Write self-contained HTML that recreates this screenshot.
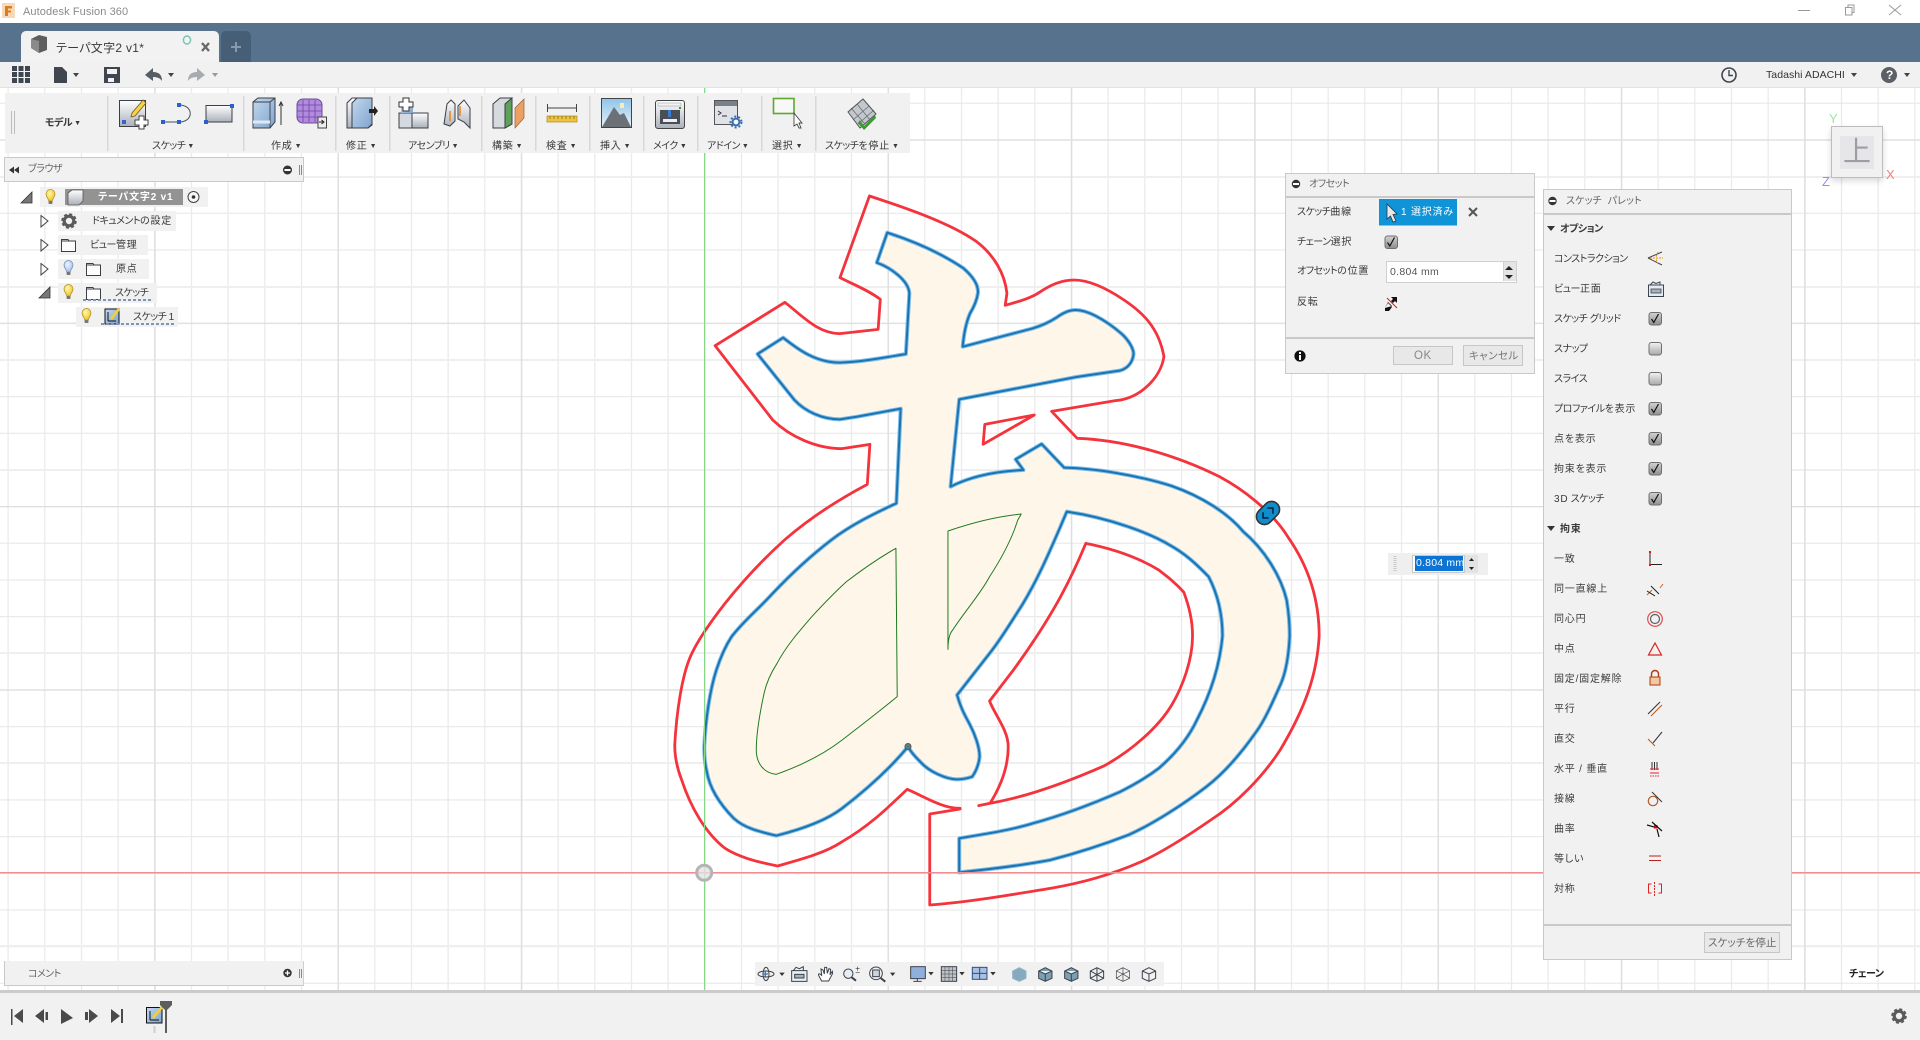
<!DOCTYPE html>
<html lang="ja"><head><meta charset="utf-8"><title>Autodesk Fusion 360</title>
<style>
html,body{margin:0;padding:0;background:#fff;width:1920px;height:1040px;overflow:hidden}
body{position:relative;font-family:"Liberation Sans","Noto Sans CJK JP",sans-serif;font-size:10px;color:#333}
.b{position:absolute;box-sizing:border-box}
.t{position:absolute;white-space:nowrap;line-height:12px;font-size:10px;letter-spacing:-.5px;font-feature-settings:"palt";color:#3a3a3a}
.p{background:#f1f1f1;border:1.5px solid #c9c9c9}
svg{position:absolute;left:0;top:0}
.ar{font-size:7px;vertical-align:1px;margin-left:2px;letter-spacing:0}
.bd{font-weight:bold}
em{font-style:normal;letter-spacing:.8px}
</style></head><body>

<!-- canvas grid -->
<svg width="1920" height="1040" viewBox="0 0 1920 1040" style="z-index:0">
<defs>
<pattern id="gx" patternUnits="userSpaceOnUse" x="704.2" y="0" width="36.667" height="10"><rect width="1.2" height="10" fill="#e9e9e9"/></pattern>
<pattern id="gy" patternUnits="userSpaceOnUse" x="0" y="872.7" width="10" height="36.667"><rect width="10" height="1.2" fill="#e9e9e9"/></pattern>
<pattern id="mx" patternUnits="userSpaceOnUse" x="704.2" y="0" width="183.333" height="10"><rect width="1.4" height="10" fill="#dedede"/></pattern>
<pattern id="my" patternUnits="userSpaceOnUse" x="0" y="872.7" width="10" height="183.333"><rect width="10" height="1.2" fill="#dedede"/></pattern>
<linearGradient id="box" x1="0" y1="0" x2="0" y2="1"><stop offset="0" stop-color="#fff"/><stop offset="1" stop-color="#aab0ba"/></linearGradient>
<linearGradient id="blu" x1="0" y1="0" x2="1" y2="1"><stop offset="0" stop-color="#c3d8ee"/><stop offset="1" stop-color="#7fa3cf"/></linearGradient>
<linearGradient id="cbg" x1="0" y1="0" x2="0" y2="1"><stop offset="0" stop-color="#f2f2f2"/><stop offset="1" stop-color="#a8a8a8"/></linearGradient>
<linearGradient id="cbc" x1="0" y1="0" x2="0" y2="1"><stop offset="0" stop-color="#d2d2d2"/><stop offset="1" stop-color="#8e8e8e"/></linearGradient>
<linearGradient id="sky" x1="0" y1="0" x2="0" y2="1"><stop offset="0" stop-color="#8fc4ea"/><stop offset="1" stop-color="#e8f2f6"/></linearGradient>
<radialGradient id="yb" cx=".4" cy=".35" r=".7"><stop offset="0" stop-color="#fff7a8"/><stop offset="1" stop-color="#eec21e"/></radialGradient>
<radialGradient id="bb" cx=".4" cy=".35" r=".7"><stop offset="0" stop-color="#eef4ff"/><stop offset="1" stop-color="#9fbbe8"/></radialGradient>
<symbol id="cb0" overflow="visible"><rect x="-6" y="-6" width="12.5" height="12.5" rx="2.5" fill="url(#cbg)" stroke="#6e6e6e" stroke-width="1"/></symbol>
<symbol id="cb1" overflow="visible"><rect x="-6" y="-6" width="12.5" height="12.5" rx="2.5" fill="url(#cbc)" stroke="#6e6e6e" stroke-width="1"/><path d="M-3.5,.5 L-1.2,4 L3.5,-4.5" fill="none" stroke="#111" stroke-width="1.2"/></symbol>
<symbol id="by" overflow="visible"><path d="M-1.8,4 C-2,1.5 -4.5,0 -4.5,-3 A4.5,4.5 0 0 1 4.5,-3 C4.5,0 2,1.5 1.8,4 Z" fill="url(#yb)" stroke="#a88a28" stroke-width=".7"/><rect x="-2" y="4" width="4" height="3" rx="1" fill="#777"/></symbol>
<symbol id="bl" overflow="visible"><path d="M-1.8,4 C-2,1.5 -4.5,0 -4.5,-3 A4.5,4.5 0 0 1 4.5,-3 C4.5,0 2,1.5 1.8,4 Z" fill="url(#bb)" stroke="#7188ad" stroke-width=".7"/><rect x="-2" y="4" width="4" height="3" rx="1" fill="#777"/></symbol>
<symbol id="fd" overflow="visible"><path d="M.5,1.5 H7 L8,3 H14.5 V13.5 H.5 Z M.5,3 H8" fill="#fdfdfd" stroke="#3b3f46" stroke-width="1"/></symbol>
<symbol id="gear" overflow="visible"><circle r="4.8" fill="none" stroke="#5a5a5a" stroke-width="3.2"/><circle r="6.8" fill="none" stroke="#5a5a5a" stroke-width="2" stroke-dasharray="3 2.34"/></symbol>
<path id="bp" vector-effect="non-scaling-stroke" d="M524,158 C600,190 660,230 700,265 C722,290 735,315 733,340 C730,365 722,385 715,400 C705,430 700,470 698,500 L860,445 C885,435 900,425 915,412 C930,398 945,390 958,390 C975,390 990,398 1005,408 C1030,425 1050,445 1065,462 C1080,480 1092,505 1092,522 C1090,545 1080,565 1060,572 L960,591 L690,658 L670,920 C700,900 750,875 838,870 L820,838 L880,792 L932,863 C1000,865 1100,885 1180,918 C1250,950 1310,1000 1345,1055 C1395,1110 1432,1190 1445,1260 C1450,1300 1452,1340 1452,1368 C1450,1420 1445,1470 1432,1510 C1415,1560 1395,1620 1375,1655 C1340,1720 1300,1780 1260,1820 C1210,1870 1140,1930 1080,1965 C1020,1995 960,2020 900,2040 C830,2057 760,2068 690,2077 L690,1975 C750,1962 810,1950 860,1930 C930,1905 1000,1870 1060,1836 C1100,1810 1125,1790 1150,1765 C1190,1720 1220,1670 1238,1620 C1262,1560 1290,1470 1297,1368 C1297,1300 1285,1240 1265,1190 C1235,1150 1210,1120 1175,1095 C1130,1060 1040,1015 938,995 L920,1050 C895,1125 870,1200 835,1275 C810,1325 785,1380 760,1420 L685,1545 C695,1590 705,1610 715,1635 C725,1660 737,1700 737,1730 C735,1755 728,1775 720,1790 C705,1797 695,1798 685,1798 C660,1798 620,1775 600,1745 C590,1732 580,1720 572,1700 C540,1750 490,1815 420,1885 C380,1925 320,1950 268,1967 C230,1955 195,1945 170,1915 C140,1875 115,1830 108,1775 C102,1745 102,1720 102,1700 C105,1620 115,1530 130,1470 C140,1430 150,1400 165,1370 C195,1320 225,1290 260,1240 C300,1185 350,1125 395,1080 C440,1035 495,1000 545,970 L555,686 L455,710 L415,718 C375,718 335,695 310,660 L225,522 L284,473 C320,510 360,548 415,548 C470,545 520,532 567,522 L575,340 C573,300 530,262 500,248 Z"/>
</defs>
<g>
<rect x="0" y="88" width="1920" height="902" fill="url(#gx)"/>
<rect x="0" y="88" width="1920" height="902" fill="url(#gy)"/>
<g fill="#efefef">
<rect y="176" width="1920" height="2"/><rect y="286" width="1920" height="2"/><rect y="359" width="1920" height="2"/><rect y="469" width="1920" height="2"/><rect y="652" width="1920" height="2"/><rect y="762" width="1920" height="2"/><rect y="945" width="1920" height="2"/>
</g>
<rect x="0" y="88" width="1920" height="902" fill="url(#mx)"/>
<rect x="0" y="88" width="1920" height="902" fill="url(#my)"/>
</g>

<!-- sketch -->
<g transform="translate(660,180) scale(.43367,.33333)" fill="none" stroke-linejoin="round" stroke-linecap="round">
<use href="#bp" style="fill:#fff6ea;stroke:#7cbcea;stroke-width:4px"/>
<use href="#bp" style="fill:none;stroke:#1b74b0;stroke-width:2px"/>
<path stroke="#f5333c" stroke-width="2.8" vector-effect="non-scaling-stroke" d="M483,48 C570,85 670,130 730,185 C770,225 795,280 800,340 L796,376 C825,365 855,355 875,337 C900,315 925,300 955,300 C990,300 1030,325 1070,360 C1110,395 1150,440 1162,530 C1155,590 1110,655 1050,662 L903,694 L962,775 C1070,780 1190,825 1290,890 C1340,925 1410,990 1450,1075 C1495,1160 1520,1260 1520,1368 C1515,1480 1490,1580 1430,1710 C1390,1790 1330,1870 1270,1920 C1220,1965 1160,2015 1110,2045 C1040,2085 970,2110 900,2125 C830,2140 720,2165 622,2175 L622,1902 L692,1887 M692,1885 C650,1885 610,1850 570,1828 C520,1890 480,1940 420,1985 C380,2020 320,2040 271,2058 C220,2045 180,2030 150,2005 C105,1960 70,1880 50,1800 C38,1760 34,1730 34,1695 C38,1600 50,1490 70,1430 C85,1385 120,1320 150,1270 C190,1205 240,1135 287,1080 C340,1020 410,960 478,913 L484,793 L420,806 C360,806 300,770 260,720 L127,497 L288,367 C330,410 365,461 415,461 L503,448 L508,358 C480,330 440,310 415,293 L483,48 M735,1877 L760,1870 C850,1850 950,1800 1025,1757 C1090,1710 1150,1640 1180,1575 C1205,1520 1228,1440 1228,1368 C1228,1320 1220,1280 1208,1237 C1190,1210 1170,1190 1150,1170 C1100,1130 1040,1105 982,1090 C950,1190 910,1300 815,1470 L760,1563 C770,1600 803,1650 803,1700 C803,1770 780,1830 762,1868 M863,705 L749,733 L745,793 Z"/>
<path stroke="#1f7a1f" stroke-width="1" vector-effect="non-scaling-stroke" d="M544,1105 L547,1550 C500,1600 460,1640 420,1680 C390,1710 340,1750 268,1783 C240,1780 222,1750 222,1710 C222,1660 230,1600 240,1540 C245,1510 255,1480 270,1450 C290,1400 320,1355 350,1310 C375,1275 400,1240 430,1205 C470,1165 510,1130 544,1105 Z M833,1002 C770,1010 715,1030 664,1053 L664,1408 C664,1380 668,1360 675,1350 C705,1290 740,1240 760,1190 C785,1140 805,1090 817,1050 L825,1020 Z"/>
</g>
<!-- axes -->
<rect x="704" y="88" width="1" height="902" fill="#86d886"/>
<rect x="0" y="872" width="1920" height="1.4" fill="#ee8e8e"/>
<circle cx="704.2" cy="872.7" r="7.5" fill="#e2e2e2" fill-opacity=".8" stroke="#b4b4b4" stroke-width="3"/>
<circle cx="908" cy="746.5" r="3" fill="#6a8a6a" stroke="#555" stroke-width="1"/><circle cx="908" cy="746.5" r="1.5" fill="#2a7fc0"/>
<g transform="translate(1268,513) rotate(-45)"><rect x="-13" y="-8" width="26" height="16" rx="8" fill="#0e8fcc" stroke="#333" stroke-width="1.6"/><path d="M-3,-4 L-7,0 L-3,4 M3,-4 L7,0 L3,4" fill="none" stroke="#124" stroke-width="1.6"/></g>
</svg>

<!-- top chrome -->
<div class="b" style="left:0;top:0;width:1920px;height:23px;background:#fff"></div>
<div class="b" style="left:0;top:23px;width:1920px;height:39px;background:#56728c"></div>
<div class="b" style="left:21px;top:31px;width:198px;height:31px;background:#f2f2f2;border-radius:5px 5px 0 0"></div>
<div class="b" style="left:221px;top:31px;width:30px;height:31px;background:#465f76;border-radius:5px 5px 0 0"></div>
<div class="b" style="left:0;top:62px;width:1920px;height:26px;background:#f1f1f1;border-bottom:1px solid #e2e2e2"></div>
<!-- toolbar -->
<div class="b" style="left:5px;top:93px;width:905px;height:60px;background:#f1f1f1"></div>
<!-- panels -->
<div class="b p" style="left:4px;top:157px;width:300px;height:25px"></div>
<div class="b p" style="left:4px;top:961px;width:300px;height:25px;border-top:0;border-right:1.5px solid #d0d0d0"></div>
<div class="b" style="left:755px;top:962px;width:409px;height:24px;background:#f1f1f1"></div>
<!-- tree row bg -->
<div class="b" style="left:40px;top:187px;width:168px;height:20px;background:#f1f1f1"></div>
<div class="b" style="left:65px;top:189px;width:118px;height:16px;background:#939393"></div>
<div class="b" style="left:58px;top:211px;width:118px;height:20px;background:#f1f1f1"></div>
<div class="b" style="left:58px;top:235px;width:90px;height:20px;background:#f1f1f1"></div>
<div class="b" style="left:58px;top:259px;width:91px;height:20px;background:#f1f1f1"></div>
<div class="b" style="left:58px;top:283px;width:99px;height:20px;background:#f1f1f1"></div>
<div class="b" style="left:76px;top:307px;width:102px;height:20px;background:#f1f1f1"></div>
<!-- offset dialog -->
<div class="b p" style="left:1285px;top:172.5px;width:250px;height:201px"></div>
<div class="b" style="left:1286px;top:196px;width:248px;height:1.5px;background:#c9c9c9"></div>
<div class="b" style="left:1286px;top:337px;width:248px;height:1.5px;background:#c9c9c9"></div>
<div class="b" style="left:1379px;top:198.5px;width:78px;height:27px;background:#0f94d8;border-bottom:1px solid #7cc4ea"></div>
<div class="b" style="left:1386px;top:261px;width:131px;height:21.5px;background:#fff;border:1.5px solid #d0d0d0"></div>
<div class="b" style="left:1503px;top:262px;width:13px;height:19px;background:#e4e4e4;border-left:1px solid #d0d0d0"></div>
<div class="b" style="left:1393px;top:346px;width:60px;height:19px;background:#e8e8e8;border:1.5px solid #c6c6c6"></div>
<div class="b" style="left:1463px;top:345px;width:60px;height:21px;background:#e8e8e8;border:1.5px solid #c6c6c6"></div>
<!-- palette -->
<div class="b p" style="left:1542.5px;top:189px;width:249.5px;height:771px"></div>
<div class="b" style="left:1543px;top:213px;width:248px;height:1.5px;background:#c9c9c9"></div>
<div class="b" style="left:1543px;top:924px;width:248px;height:1.5px;background:#c9c9c9"></div>
<div class="b" style="left:1704px;top:932px;width:76px;height:21px;background:#e8e8e8;border:1.5px solid #c6c6c6"></div>
<!-- float input -->
<div class="b" style="left:1388px;top:553px;width:100px;height:22px;background:#efefef"></div>
<div class="b" style="left:1412px;top:555px;width:53px;height:18px;background:#fff;border:1px solid #c9c9c9"></div>
<div class="b" style="left:1415px;top:556px;width:48px;height:15px;background:#0b74d4"></div>
<div class="b" style="left:1465px;top:555px;width:13px;height:18px;background:#e3e3e3"></div>
<!-- view cube -->
<div class="b" style="left:1831px;top:126px;width:52px;height:52px;background:#f1f1f1;border:1px solid #bdbdbd;box-shadow:0 3px 6px rgba(0,0,0,.15)"></div>
<div class="b" style="left:1840px;top:136px;width:34px;height:33px;background:#e6e6e8"></div>
<!-- bottom -->
<div class="b" style="left:0;top:990px;width:1920px;height:50px;background:#f1f1f1;border-top:3px solid #cbcbcb"></div>

<!-- icons overlay -->
<svg width="1920" height="1040" viewBox="0 0 1920 1040" style="z-index:2">
<!-- title -->
<rect x="2" y="3" width="13" height="15" fill="#f6d9b8"/><path d="M5,6 H12 V8.5 H8 V10.5 H11 V12.5 H8 V16 H5 Z" fill="#e07a1f"/>
<path d="M1798,10.5 H1810" stroke="#999" stroke-width="1"/>
<path d="M1845.5,7.5 H1852 V15 H1845.5 Z M1848,7.5 V5 H1854 V12.5 H1852" fill="none" stroke="#999" stroke-width="1"/>
<path d="M1889,5 L1901,15 M1901,5 L1889,15" stroke="#999" stroke-width="1"/>
<!-- tab -->
<path d="M31,39 L39,35 L47,37 V50 L39,53 L31,48 Z" fill="#5e5e5e"/><path d="M31,39 L39,41 L39,53 L31,48 Z" fill="#8a8a8a"/>
<ellipse cx="187" cy="40" rx="3.6" ry="4" fill="none" stroke="#74c4b0" stroke-width="1.4"/>
<path d="M202,43 L209,51 M209,43 L202,51" stroke="#6a6a6a" stroke-width="2.4"/>
<path d="M236,42 V52 M231,47 H241" stroke="#8799aa" stroke-width="2"/>
<!-- quick bar -->
<g fill="#3f4650"><rect x="12" y="66" width="5" height="5"/><rect x="18.5" y="66" width="5" height="5"/><rect x="25" y="66" width="5" height="5"/><rect x="12" y="72" width="5" height="5"/><rect x="18.5" y="72" width="5" height="5"/><rect x="25" y="72" width="5" height="5"/><rect x="12" y="78" width="5" height="5"/><rect x="18.5" y="78" width="5" height="5"/><rect x="25" y="78" width="5" height="5"/></g>
<path d="M54,67 H62 L67,72 V83 H54 Z" fill="#3f4650"/><path d="M73,73 H79 L76,77 Z" fill="#444"/>
<path d="M104,67 H120 V83 H104 Z" fill="#3f4650"/><rect x="107" y="69" width="10" height="5" fill="#f1f1f1"/><rect x="108" y="78" width="6" height="4" fill="#f1f1f1"/>
<path d="M145,75 L153,68 V72 C159,72 162,75 162,81 C160,78 157,77 153,77 V81 Z" fill="#555d66"/><path d="M168,73 H174 L171,77 Z" fill="#444"/>
<path d="M205,75 L197,68 V72 C191,72 188,75 188,81 C190,78 193,77 197,77 V81 Z" fill="#a7acb2"/><path d="M212,73 H218 L215,77 Z" fill="#999"/>
<circle cx="1729" cy="75" r="7" fill="none" stroke="#3f4650" stroke-width="1.6"/><path d="M1729,70 V75.5 H1733" fill="none" stroke="#3f4650" stroke-width="1.4"/>
<path d="M1851,73 H1857 L1854,77 Z" fill="#444"/>
<circle cx="1889" cy="75" r="8" fill="#5b5f66"/><path d="M1904,73 H1910 L1907,77 Z" fill="#444"/>
<!-- toolbar seps -->
<g fill="#d8d8d8"><rect x="11" y="111" width="1" height="23" fill="#bcbcbc"/><rect x="14" y="111" width="1" height="23" fill="#bcbcbc"/>
<rect x="107" y="96" width="1.5" height="55"/><rect x="243" y="96" width="1.5" height="55"/><rect x="335" y="96" width="1.5" height="55"/><rect x="389" y="96" width="1.5" height="55"/><rect x="481" y="96" width="1.5" height="55"/><rect x="535" y="96" width="1.5" height="55"/><rect x="589" y="96" width="1.5" height="55"/><rect x="643" y="96" width="1.5" height="55"/><rect x="697" y="96" width="1.5" height="55"/><rect x="761" y="96" width="1.5" height="55"/><rect x="815" y="96" width="1.5" height="55"/></g>
<!-- sketch -->
<rect x="119.5" y="100.5" width="26" height="26" fill="url(#box)" stroke="#3b3f46"/><path d="M132,113 L143,100 L146,103 L135,116 L131,117 Z" fill="#f6d24a" stroke="#6b5a20" stroke-width=".8"/>
<rect x="122" y="120" width="4" height="4" fill="#3366c8"/><path d="M139,116 H144 V120 H148 V125 H144 V129 H139 V125 H135 V120 H139 Z" fill="#fff" stroke="#444"/>
<path d="M163,122 H179 M179,105 C194,105 194,122 179,122" fill="none" stroke="#4a4f58" stroke-width="1"/>
<rect x="161" y="120" width="4" height="4" fill="#2d5fd0"/><rect x="177" y="120" width="4" height="4" fill="#2d5fd0"/><rect x="177" y="103" width="4" height="4" fill="#2d5fd0"/>
<rect x="206" y="105.5" width="26" height="16.5" fill="url(#box)" stroke="#3b3f46"/><rect x="204" y="120" width="4" height="4" fill="#2d5fd0"/><rect x="230" y="104" width="4" height="4" fill="#2d5fd0"/>
<!-- extrude -->
<path d="M253,102 L258,98 H275 V122 L270,128 H253 Z" fill="url(#blu)" stroke="#3b3f46"/><path d="M270,102 V128 M253,102 H270 L275,98" fill="none" stroke="#3b3f46" stroke-width=".9"/><path d="M253,122 H270" stroke="#dfe8f3" stroke-width="3"/>
<path d="M281,125 V103 M279,106 L281,102 L283,106" fill="none" stroke="#333" stroke-width="1"/>
<rect x="297" y="99" width="25" height="24" rx="6" fill="#b28be0" stroke="#6a4a9a"/><path d="M303,100 V122 M309,100 V122 M315,100 V122 M297,105 H322 M297,111 H322 M297,117 H322" stroke="#6a4a9a" stroke-width=".8"/>
<rect x="318" y="117" width="8.5" height="11" fill="#eee" stroke="#444"/><path d="M319,122 H323 M321.5,120 L324,122 L321.5,124" fill="none" stroke="#222"/>
<!-- modify -->
<path d="M347,103 L352,98 H372 V125 L368,128 H347 Z" fill="url(#box)" stroke="#3b3f46"/><path d="M352,103 L357,98 H372 V124 L368,128 H352 Z" fill="url(#blu)" stroke="#3b3f46"/><path d="M369,109 H374 V106 L378,111 L374,116 V113 H369 Z" fill="#222"/>
<!-- assemble -->
<path d="M399,113 H417 V128 H399 Z" fill="#d4d9df" stroke="#3b3f46"/><path d="M412,113 H428 V128 H412 Z" fill="url(#box)" stroke="#3b3f46"/><path d="M401,104 H413 V113 H401 Z" fill="url(#blu)"/>
<path d="M403,98 H409 V102 H413 V107 H409 V111 H403 V107 H399 V102 H403 Z" fill="#fff" stroke="#333"/>
<path d="M444,124 L447,104 L451,100 L455,104 V121 L450,126 Z M458,119 V106 L464,100 L470,108 V128 L464,122 Z" fill="url(#box)" stroke="#3b3f46"/><path d="M460,106 V116 M450,111 V121" stroke="#e9831c" stroke-width="1.5"/>
<!-- construct -->
<path d="M493,104 L500,98 H512 V124 L505,128 H493 Z" fill="#d6dade" stroke="#3b3f46"/><path d="M505,104 L512,98 V124 L505,128 Z" fill="#5fa05a" stroke="#3b3f46"/><path d="M515,128 V108 L524,99 V118 Z" fill="#eba066" stroke="#9a6030" stroke-width=".7"/>
<!-- inspect -->
<path d="M547.5,104 V112 M576.5,104 V112 M547.5,108 H576.5" stroke="#444" fill="none"/><rect x="547" y="116" width="30" height="6" fill="#edc43a" stroke="#a9862a" stroke-width=".7"/><path d="M550,116 v3 M554,116 v3 M558,116 v3 M562,116 v3 M566,116 v3 M570,116 v3 M574,116 v3" stroke="#7a6320" stroke-width=".7"/>
<!-- insert -->
<rect x="601.5" y="98.5" width="30" height="29" fill="url(#sky)" stroke="#444"/><path d="M602,127 L614,107 L620,115 L624,113 L631,127 Z" fill="#6c7178"/><rect x="620" y="103" width="4" height="5" fill="#f6efb4"/>
<!-- make -->
<rect x="655.5" y="100.5" width="29" height="28" rx="2.5" fill="url(#box)" stroke="#444"/><rect x="660" y="110" width="20" height="14" fill="#4a4e55"/><rect x="663" y="119" width="14" height="3" fill="#eee"/><rect x="668" y="110" width="3" height="7" fill="#3b7bd0"/><rect x="658" y="103" width="23" height="3" fill="#f3f3f3" stroke="#999" stroke-width=".5"/><rect x="679" y="107" width="2" height="2" fill="#3b9a3b"/>
<!-- addin -->
<rect x="714.5" y="100.5" width="23" height="24" fill="#dfe2e7" stroke="#555"/><rect x="715" y="101" width="22" height="5" fill="#7b8088"/><path d="M718,111 L721,113 L718,115 M722,116 H727" fill="none" stroke="#333"/><circle cx="736" cy="122" r="3.4" fill="#fff" stroke="#3a6fb0" stroke-width="2"/><circle cx="736" cy="122" r="5.5" fill="none" stroke="#3a6fb0" stroke-width="2" stroke-dasharray="2 2"/>
<!-- select -->
<rect x="773.5" y="98.5" width="20.5" height="15" fill="#f8f8f8" stroke="#5ca82e" stroke-width="1.6"/><path d="M794,113 L802,123 L799,123 L801,128 L799,128 L797,124 L794,126 Z" fill="#fff" stroke="#444" stroke-width=".9"/>
<!-- finish -->
<path d="M863,99 L876,114 L860,128 L848,112 Z" fill="#c3c8cf" stroke="#555"/><path d="M857,104 L870,120 M851,108 L865,124 M869,106 L853,120 M874,110 L857,125" stroke="#666" stroke-width=".7"/><path d="M860,120 L864,126 L875,115 L876,118 L864,130 L858,123 Z" fill="#3c9a32"/>
<!-- browser head -->
<path d="M9,170 L14,166.5 V173.5 Z M14,170 L19,166.5 V173.5 Z" fill="#333"/>
<circle cx="287.5" cy="170" r="4.5" fill="#333"/><rect x="284.5" y="169" width="6" height="2" fill="#fff"/>
<rect x="299" y="165" width="1" height="10" fill="#8a8a8a"/><rect x="301" y="165" width="1" height="10" fill="#8a8a8a"/>
<!-- tree -->
<path d="M21,203 L32,192 V203 Z" fill="#777" stroke="#333" stroke-width=".8"/>
<use href="#by" x="50.5" y="197"/>
<path d="M68,193 L72,190 H83 V201 L79,205 H68 Z" fill="url(#box)" stroke="#555" stroke-width=".8"/>
<circle cx="193.5" cy="197" r="5.5" fill="#f6f6f6" stroke="#444"/><circle cx="193.5" cy="197" r="1.8" fill="#333"/>
<path d="M41,215.5 L48,221 L41,227 Z M41,239.5 L48,245 L41,251 Z M41,263.5 L48,269 L41,275 Z" fill="#fbfbfb" stroke="#444"/>
<use href="#gear" x="69" y="221"/>
<use href="#fd" x="61" y="238"/>
<use href="#bl" x="68.5" y="268"/><use href="#fd" x="86" y="262"/>
<path d="M39,298 L50,287 V298 Z" fill="#777" stroke="#333" stroke-width=".8"/>
<use href="#by" x="68.5" y="292"/><use href="#fd" x="86" y="286"/>
<use href="#by" x="86.5" y="316"/>
<rect x="105" y="309" width="14" height="15" fill="url(#blu)" stroke="#111" stroke-width="1"/><path d="M108,321 V312 M108,321 H116" stroke="#111"/><path d="M110,318 L118,308 L120,310 L112,320 Z" fill="#f2cf3a"/>
<path d="M83,300 H152 M101,324 H176" stroke="#7f95b5" stroke-width="2" stroke-dasharray="3 2"/>
<!-- offset icons -->
<circle cx="1296" cy="184" r="4.2" fill="#333"/><rect x="1293" y="183" width="6" height="2" fill="#fff"/>
<path d="M1387,204 L1397,214 L1393,214.5 L1396,221 L1393,222 L1390.5,216 L1387,219 Z" fill="#e8e8e8" stroke="#333" stroke-width=".8"/>
<path d="M1469,208 L1477,216 M1477,208 L1469,216" stroke="#555" stroke-width="2"/>
<use href="#cb1" x="1391" y="242"/>
<path d="M1505,270 L1513,270 L1509,266 Z M1505,275 H1513 L1509,279 Z" fill="#222"/>
<path d="M1385,308 L1388,302 L1392,306 L1385,308 Z M1385,308 L1385,311 H1389 L1392,307 L1388,303 Z M1397,297 H1391 L1393,299 L1391,301 L1393,303 L1395,301 L1397,303 Z" fill="#111"/>
<path d="M1387,298 L1397,308" stroke="#e11" stroke-width="1"/>
<circle cx="1300" cy="356" r="5.6" fill="#111"/><rect x="1299" y="355" width="2" height="5" fill="#fff"/><rect x="1299" y="352" width="2" height="2" fill="#fff"/>
<!-- palette icons -->
<circle cx="1552.5" cy="201" r="4.2" fill="#333"/><rect x="1549.5" y="200" width="6" height="2" fill="#fff"/>
<path d="M1547,226 H1555 L1551,231 Z M1547,526 H1555 L1551,531 Z" fill="#333"/>
<path d="M1648,258 L1662,252 M1648,258 L1662,265" stroke="#444" stroke-width="1"/><path d="M1650,258 H1663 M1658,252 L1656,257 M1658,264 L1656,259" stroke="#f09010" stroke-width="1" stroke-dasharray="2 1" fill="none"/>
<path d="M1648.5,285 H1663.5 V296.5 H1648.5 Z M1650,285 L1653,282 L1656,283.5 L1660,282 V285" fill="#e6e9ee" stroke="#3b4652"/><rect x="1651" y="289" width="10" height="4" fill="#a9b0bb" stroke="#3b4652" stroke-width=".8"/>
<use href="#cb1" x="1655" y="318.5"/><use href="#cb0" x="1655" y="348.5"/><use href="#cb0" x="1655" y="378.5"/><use href="#cb1" x="1655" y="408.5"/><use href="#cb1" x="1655" y="438.5"/><use href="#cb1" x="1655" y="468.5"/><use href="#cb1" x="1655" y="498.5"/>
<path d="M1650,553 V564.5 H1662" fill="none" stroke="#222"/><rect x="1649" y="551" width="2" height="2" fill="#e11"/><rect x="1649" y="564" width="2" height="2" fill="#e11"/>
<path d="M1647,595 L1652,590 M1660,588 L1663,584" stroke="#d0601c"/><path d="M1651,586 L1659,594 M1647,591 L1655,596" stroke="#222"/>
<circle cx="1655" cy="619" r="7.3" fill="none" stroke="#e24b4b" stroke-width="1.2"/><circle cx="1655" cy="619" r="4.5" fill="none" stroke="#5a5f6a" stroke-width="1.2"/>
<path d="M1655,643 L1661.5,655 H1648.5 Z" fill="none" stroke="#d22" stroke-width="1.2"/>
<rect x="1650" y="677" width="10" height="8" fill="#f3c7a0" stroke="#b23a0c"/><path d="M1651.5,677 V674 A3.5,3.5 0 0 1 1658.5,674 V677" fill="none" stroke="#b23a0c" stroke-width="1.4"/>
<path d="M1648,714 L1660,702" stroke="#333"/><path d="M1651,716 L1662,705" stroke="#c8501a"/>
<path d="M1653,743 L1662,732" stroke="#333"/><path d="M1648,739 L1655,746" stroke="#c8501a"/>
<path d="M1652,762 V770 M1654.5,762 V770 M1657,762 V770" stroke="#333"/><path d="M1650,769 H1659 M1650,773 H1659" stroke="#d23"/><path d="M1650,776 H1659" stroke="#d23" stroke-dasharray="1.5 1"/>
<circle cx="1653" cy="801" r="4.7" fill="none" stroke="#b85a2a" stroke-width="1.2"/><path d="M1652,792 L1662,802" stroke="#333"/>
<rect x="1654" y="825" width="3.5" height="3.5" fill="#e00"/><path d="M1647,825 L1654,827 M1652,822 L1662,831 M1657,829 L1659,837" stroke="#111" stroke-width="1.2"/>
<path d="M1649,856 H1661 M1649,860.5 H1661" stroke="#b8221c" stroke-width="1"/>
<path d="M1651.5,884 H1648.5 V893 H1651.5 M1658.5,884 H1661.5 V893 H1658.5" fill="none" stroke="#d22" stroke-width="1"/><path d="M1654.5,882 V896" stroke="#d22" stroke-width="1" stroke-dasharray="2 1"/>
<!-- comment -->
<circle cx="287.5" cy="973" r="4.2" fill="#333"/><path d="M285,973 H290 M287.5,970.5 V975.5" stroke="#fff" stroke-width="1.3"/>
<rect x="299" y="969" width="1" height="9" fill="#8a8a8a"/><rect x="301" y="969" width="1" height="9" fill="#8a8a8a"/>
<!-- nav bar -->
<g transform="translate(740,950) scale(.3333)" fill="none" stroke="#3c424a" stroke-width="3">
<ellipse cx="78" cy="72" rx="9" ry="20"/><ellipse cx="78" cy="72" rx="24" ry="9"/><path d="M69,72 H84 M76,65 V80" stroke="#2e78c8" stroke-width="4"/>
<path d="M118,68 H134 L126,78 Z" fill="#333" stroke="none"/>
<path d="M155,62 H201 V94 H155 Z M160,62 L168,52 L178,56 L190,50 V62" fill="#edf0f3"/><rect x="164" y="73" width="28" height="11" fill="#a9b0bb"/>
<path d="M245,93 C235,75 232,70 240,72 L245,76 L243,57 L249,60 L253,72 L254,52 L260,52 L262,70 L267,56 L272,58 L270,74 L277,64 L278,70 L266,93 Z" fill="#fff"/>
<circle cx="325" cy="71" r="14" fill="#e8edf3"/><path d="M335,82 L348,92" stroke-width="6"/><path d="M347,56 H359 M353,50 V62 M347,68 H359" stroke-width="2"/>
<circle cx="408" cy="70" r="19" fill="#eef1f4"/><rect x="398" y="60" width="20" height="20" fill="#cfd5dc"/><path d="M422,84 L436,95" stroke-width="6"/>
<path d="M450,68 H466 L458,78 Z" fill="#333" stroke="none"/>
<rect x="512" y="50" width="44" height="36" fill="#8fb0dc"/><path d="M532,86 V94 M520,94 H545" />
<path d="M565,66 H581 L573,76 Z" fill="#333" stroke="none"/>
<rect x="604" y="50" width="46" height="44" fill="#bfc2c7"/><path d="M615,50 V94 M627,50 V94 M638,50 V94 M604,61 H650 M604,72 H650 M604,83 H650" stroke-width="1.5"/>
<path d="M658,66 H674 L666,76 Z" fill="#333" stroke="none"/>
<rect x="697" y="52" width="44" height="36" fill="#a8c0e2" stroke="#2d4f86"/><path d="M719,52 V88 M697,70 H741" stroke="#2d4f86"/>
<path d="M751,66 H767 L759,76 Z" fill="#333" stroke="none"/>
<path d="M838,53 L858,63 V85 L838,94 L818,85 V63 Z" fill="#86abc0" stroke="#8fb5c8"/>
<path d="M916,53 L936,63 V85 L916,94 L896,85 V63 Z M916,72 V94 M896,63 L916,72 L936,63" fill="#7d9fb2" stroke="#3c424a"/>
<path d="M994,53 L1014,63 V85 L994,94 L974,85 V63 Z M994,72 V94 M974,63 L994,72 L1014,63" fill="#7d9fb2" stroke="#3c424a"/>
<path d="M1071,53 L1091,63 V85 L1071,94 L1051,85 V63 Z M1071,53 V94 M1051,63 L1091,85 M1091,63 L1051,85"/>
<path d="M1149,53 L1169,63 V85 L1149,94 L1129,85 V63 Z M1149,72 V94 M1129,63 L1149,72 L1169,63 M1149,53 V72 M1129,85 L1149,72 L1169,85" stroke-width="2"/>
<path d="M1227,53 L1247,63 V85 L1227,94 L1207,85 V63 Z M1227,72 V94 M1207,63 L1227,72 L1247,63"/>
</g>
<!-- float input arrows -->
<path d="M1469,561 L1471.5,558 L1474,561 Z M1469,567 L1474,567 L1471.5,570 Z" fill="#222"/>
<!-- grip -->
<path d="M1395,556 V571" stroke="#c9c9c9" stroke-width="3" stroke-dasharray="1 1"/>
<!-- timeline -->
<path d="M11,1009 h1.5 v16 H11 Z M23,1009 V1023 L14,1016 Z" fill="#4a4a4a"/>
<path d="M35,1016 L44,1009 V1023 Z M45.5,1012 H48 V1020 H45.5 Z" fill="#4a4a4a"/>
<path d="M61,1009 L73,1018 L61,1024 Z" fill="#4a4a4a"/>
<path d="M85,1012 H88 V1020 H85 Z M89,1009 L98,1016 L89,1023 Z" fill="#4a4a4a"/>
<path d="M111,1009 L120,1016 L111,1023 Z M121,1009 H123 V1023 H121 Z" fill="#4a4a4a"/>
<rect x="146.5" y="1007.5" width="15.5" height="15.5" fill="url(#blu)" stroke="#111"/><path d="M150,1020 V1011 M150,1020 H159" stroke="#111"/><path d="M152,1017 L161,1006 L163,1008 L154,1019 Z" fill="#f2cf3a"/>
<rect x="153.5" y="1026" width="2" height="7" fill="#cfcfcf"/>
<path d="M160,1001 H172 V1005 L167,1010 V1033 H165 V1010 L160,1005 Z" fill="#5d5d5d"/>
<use href="#gear" x="1899" y="1016"/>
</svg>

<!-- text -->
<div style="position:absolute;left:0;top:0;z-index:3">
<div class="t" style="left:23px;top:6px;color:#8a8a8a;font-size:11px;letter-spacing:.1px">Autodesk Fusion 360</div>
<div class="t" style="left:56px;top:41px;color:#3a3a3a;font-size:12px;line-height:14px;letter-spacing:.3px">テーパ文字2 v1*</div>
<div class="t" style="left:1766px;top:69px;color:#333;font-size:10.5px;letter-spacing:.05px">Tadashi ADACHI</div>
<div class="t" style="left:1886px;top:69px;color:#fff;font-weight:bold;font-size:12px">?</div>

<div class="t bd" style="left:45px;top:118px">モデル<span class="ar">▼</span></div>
<div class="t" style="left:152px;top:141px">スケッチ<span class="ar">▼</span></div>
<div class="t" style="left:271px;top:141px"><em>作成</em><span class="ar">▼</span></div>
<div class="t" style="left:346px;top:141px"><em>修正</em><span class="ar">▼</span></div>
<div class="t" style="left:408px;top:141px">アセンブリ<span class="ar">▼</span></div>
<div class="t" style="left:492px;top:141px"><em>構築</em><span class="ar">▼</span></div>
<div class="t" style="left:546px;top:141px"><em>検査</em><span class="ar">▼</span></div>
<div class="t" style="left:600px;top:141px"><em>挿入</em><span class="ar">▼</span></div>
<div class="t" style="left:653px;top:141px">メイク<span class="ar">▼</span></div>
<div class="t" style="left:707px;top:141px">アドイン<span class="ar">▼</span></div>
<div class="t" style="left:772px;top:141px"><em>選択</em><span class="ar">▼</span></div>
<div class="t" style="left:825px;top:141px">スケッチ<em>を停止</em><span class="ar">▼</span></div>

<div class="t" style="left:28px;top:164px;color:#666">ブラウザ</div>
<div class="t bd" style="left:98px;top:192px;color:#fff"><em>テーパ文字2 v1</em></div>
<div class="t" style="left:92px;top:216px">ドキュメント<em>の設定</em></div>
<div class="t" style="left:90px;top:240px">ビュー<em>管理</em></div>
<div class="t" style="left:116px;top:264px"><em>原点</em></div>
<div class="t" style="left:115px;top:288px">スケッチ</div>
<div class="t" style="left:133px;top:312px">スケッチ 1</div>
<div class="t" style="left:28px;top:969px;color:#666">コメント</div>

<div class="t" style="left:1309px;top:179px;color:#666">オフセット</div>
<div class="t" style="left:1297px;top:207px">スケッチ<em>曲線</em></div>
<div class="t" style="left:1401px;top:207px;color:#fff"><em>1 選択済み</em></div>
<div class="t" style="left:1297px;top:237px">チェーン<em>選択</em></div>
<div class="t" style="left:1297px;top:266px">オフセット<em>の位置</em></div>
<div class="t" style="left:1390px;top:266px;color:#555;font-size:10.5px;letter-spacing:.3px">0.804 mm</div>
<div class="t" style="left:1297px;top:297px"><em>反転</em></div>
<div class="t" style="left:1414px;top:350px;color:#888;font-size:11.5px;line-height:13px;letter-spacing:.5px">OK</div>
<div class="t" style="left:1469px;top:350px;color:#777;font-size:10.5px;letter-spacing:.4px">キャンセル</div>

<div class="t" style="left:1566px;top:196px;color:#666;letter-spacing:.1px;word-spacing:3px">スケッチ パレット</div>
<div class="t bd" style="left:1560px;top:224px">オプション</div>
<div class="t" style="left:1554px;top:254px">コンストラクション</div>
<div class="t" style="left:1554px;top:284px">ビュー<em>正面</em></div>
<div class="t" style="left:1554px;top:314px">スケッチ グリッド</div>
<div class="t" style="left:1554px;top:344px">スナップ</div>
<div class="t" style="left:1554px;top:374px">スライス</div>
<div class="t" style="left:1554px;top:404px">プロファイル<em>を表示</em></div>
<div class="t" style="left:1554px;top:434px"><em>点を表示</em></div>
<div class="t" style="left:1554px;top:464px"><em>拘束を表示</em></div>
<div class="t" style="left:1554px;top:494px"><em>3D</em> スケッチ</div>
<div class="t bd" style="left:1560px;top:524px"><em>拘束</em></div>
<div class="t" style="left:1554px;top:554px"><em>一致</em></div>
<div class="t" style="left:1554px;top:584px"><em>同一直線上</em></div>
<div class="t" style="left:1554px;top:614px"><em>同心円</em></div>
<div class="t" style="left:1554px;top:644px"><em>中点</em></div>
<div class="t" style="left:1554px;top:674px"><em>固定/固定解除</em></div>
<div class="t" style="left:1554px;top:704px"><em>平行</em></div>
<div class="t" style="left:1554px;top:734px"><em>直交</em></div>
<div class="t" style="left:1554px;top:764px"><em>水平 / 垂直</em></div>
<div class="t" style="left:1554px;top:794px"><em>接線</em></div>
<div class="t" style="left:1554px;top:824px"><em>曲率</em></div>
<div class="t" style="left:1554px;top:854px"><em>等しい</em></div>
<div class="t" style="left:1554px;top:884px"><em>対称</em></div>
<div class="t" style="left:1708px;top:937px;color:#666;font-size:10.5px;letter-spacing:.1px">スケッチを停止</div>
<div class="t bd" style="left:1849px;top:969px;color:#222">チェーン</div>
<div class="t" style="left:1416px;top:557px;color:#fff;font-size:10.5px;letter-spacing:.2px">0.804 mm</div>
<div class="t" style="left:1843px;top:137px;color:#9c9ea4;font-size:28px;line-height:30px;letter-spacing:0">上</div>
<div class="t" style="left:1829px;top:113px;color:#98e898;font-size:13px;letter-spacing:0">Y</div>
<div class="t" style="left:1886px;top:169px;color:#f08080;font-size:13px;letter-spacing:0">X</div>
<div class="t" style="left:1822px;top:176px;color:#8f8ff0;font-size:13px;letter-spacing:0">Z</div>
</div>
</body></html>
